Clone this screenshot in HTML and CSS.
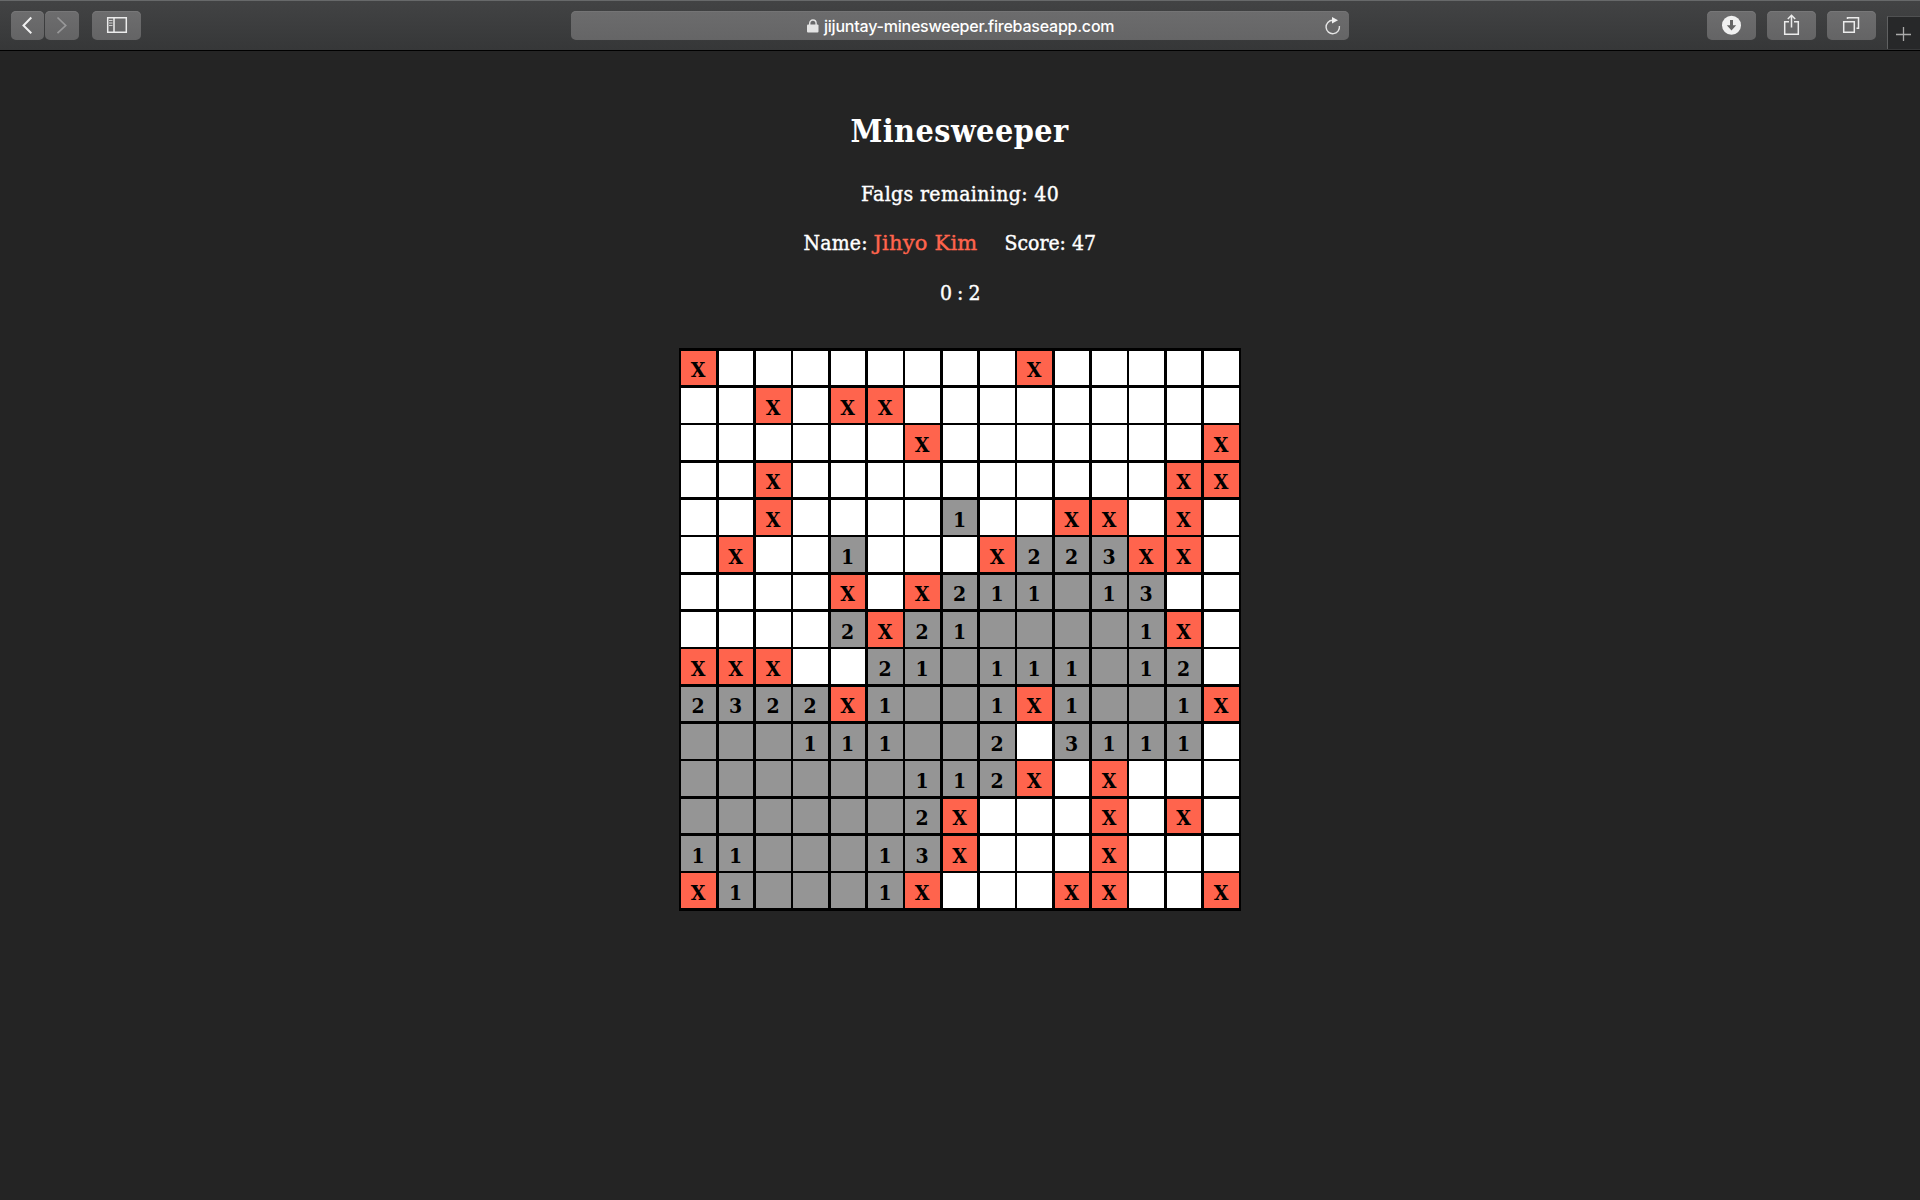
FILE: index.html
```
<!DOCTYPE html>
<html lang="en">
<head>
<meta charset="utf-8">
<title>Minesweeper</title>
<link rel="stylesheet" href="styles.css">
</head>
<body>
<header class="toolbar">
  <div class="group nav">
    <button class="btn arrow" aria-label="Back"><svg width="33" height="29" viewBox="0 0 33 29"><path d="M20.3 6.500 12.500 14.500 20.300 22.200" fill="none" stroke="#f0f0f0" stroke-width="2"/></svg></button>
    <button class="btn arrow" aria-label="Forward"><svg width="34" height="29" viewBox="0 0 34 29"><path d="M12.500 6.500 20.700 14.500 12.500 22.200" fill="none" stroke="#989899" stroke-width="1.700"/></svg></button>
    <button class="btn sidebar" aria-label="Sidebar"><svg width="49" height="29" viewBox="0 0 49 29"><path d="M15.700 6.700h18.600v14.600H15.700zM22 6.500v15" fill="none" stroke="#ececec" stroke-width="1.500"/><path d="M17 9.500h3.500M17 12h3.500M17 14.500h3.500" stroke="#ccc"/></svg></button>
  </div>
  <div class="address">
    <svg class="lock" width="12" height="14" viewBox="0 0 12 14"><path d="M2.700 6V4.200a3.200 3.200 0 0 1 6.400 0V6" fill="none" stroke="#e4e4e4" stroke-width="1.400"/><rect x="0" y="5.500" width="11.500" height="8" rx="1" fill="#e4e4e4"/></svg>
    <span class="url">jijuntay-minesweeper.firebaseapp.com</span>
    <svg class="reload" width="18" height="18" viewBox="0 0 18 18"><path d="M8.700 3.300A6.700 6.700 0 1 0 15.400 9" fill="none" stroke="#e4e4e4" stroke-width="1.400"/><path d="M8 0 14 3.300 8 6.600z" fill="#f0f0f0"/></svg>
  </div>
  <div class="group actions">
    <button class="btn" aria-label="Downloads"><svg width="49" height="29" viewBox="0 0 49 29"><circle cx="24.500" cy="14.300" r="9.500" fill="#f0f0f0"/><path d="M23 9h3v5.300h3.200L24.500 19.500 19.800 14.300H23z" fill="#666"/></svg></button>
    <button class="btn" aria-label="Share"><svg width="49" height="29" viewBox="0 0 49 29"><path d="M22 10.700h-4.300v12.600h13.600V10.700H27M24.500 16.500V4.500M20.800 8l3.700-3.700L28.200 8" fill="none" stroke="#ececec" stroke-width="1.500"/></svg></button>
    <button class="btn" aria-label="Tabs"><svg width="49" height="29" viewBox="0 0 49 29"><path d="M16.700 10.700h10.600v10.600H16.700zM20.500 8V6.700h11v10.600h-2" fill="none" stroke="#ececec" stroke-width="1.500"/></svg></button>
  </div>
  <div class="newtab"><svg width="32" height="33" viewBox="0 0 32 33"><path d="M8 17.500h15M15.500 10v14" stroke="#aaa" stroke-width="1.300"/></svg></div>
</header>
<main class="game">
  <h1 class="title">Minesweeper</h1>
  <p class="line flags">Falgs remaining: 40</p>
  <p class="line player"><span class="label">Name:</span><span class="name">Jihyo Kim</span><span class="score">Score: 47</span></p>
  <p class="line time">0 : 2</p>
  <div class="board" id="board"></div>
</main>
<script src="board.js"></script>
</body>
</html>
```
FILE: board.js
```
// X = mine, digit = neighbour count, _ = opened and empty, . = covered
const rows = [
  "X........X.....",
  "..X.XX.........",
  "......X.......X",
  "..X..........XX",
  "..X....1..XX.X.",
  ".X..1...X223XX.",
  "....X.X211_13..",
  "....2X21____1X.",
  "XXX..21_111_12.",
  "2322X1__1X1__1X",
  "___111__2.3111.",
  "______112X.X...",
  "______2X...X.X.",
  "11___13X...X...",
  "X1___1X...XX..X"
];
const board = document.getElementById("board");
for (const row of rows) {
  const line = document.createElement("div");
  line.className = "row";
  for (const c of row) {
    const cell = document.createElement("div");
    cell.className = "cell" + (c === "X" ? " mine" : c === "." ? "" : " open");
    if (c !== "." && c !== "_") cell.textContent = c;
    line.append(cell);
  }
  board.append(line);
}
```
FILE: styles.css
```
* { box-sizing: border-box; }
body {
  margin: 0;
  min-height: 1200px;
  background: #242424;
  color: #fff;
  font-family: "Roboto Slab", "DejaVu Serif Condensed", "DejaVu Serif", serif;
}
.toolbar {
  display: grid;
  grid-template-columns: 571px 778px 1fr 33px;
  height: 51px;
  padding-top: 10px;
  background: linear-gradient(#424344, #363738);
  border-top: 1px solid #67696a;
  border-bottom: 1px solid #000;
}
.group { display: flex; height: 29px; }
.nav { padding-left: 11px; }
.actions { justify-content: flex-end; gap: 11px; padding-right: 11px; }
.btn {
  width: 49px;
  height: 29px;
  padding: 0;
  border: 0;
  border-radius: 5px;
  background: linear-gradient(#6d6d6e, #646465);
  box-shadow: inset 0 1px #777778;
}
.btn svg { display: block; }
.arrow { width: 33px; margin-right: 1px; }
.arrow + .arrow { width: 34px; margin-right: 13px; }
.address {
  display: flex;
  align-items: center;
  height: 29px;
  padding: 0 7px 0 236px;
  border-radius: 5px;
  background: linear-gradient(#6c6c6d, #656566);
  box-shadow: inset 0 1px #747475;
}
.lock { margin-right: 5px; }
.url { padding-top: 2px; font: 500 16px/29px Inter, sans-serif; letter-spacing: -0.22px; white-space: nowrap; }
.reload { margin-left: auto; }
.newtab {
  height: 33px;
  margin-top: 5px;
  background: #272829;
  border-left: 1px solid #606162;
  border-top: 1px solid #505152;
}
.game { display: flex; flex-direction: column; align-items: center; }
.title { margin: 54px 0 0; padding-right: 1px; font-size: 32px; line-height: 52px; height: 64px; letter-spacing: 0.450px; }
.line { margin: 0; height: 49.300px; font-size: 21px; line-height: 50px; white-space: nowrap; -webkit-text-stroke: 0.400px; }
.flags { letter-spacing: 0.370px; }
.time { letter-spacing: -0.450px; }
.player { display: flex; width: 313px; }
.label { width: 70px; letter-spacing: 0.200px; }
.name { width: 131px; font-family: "Roboto Slab", "DejaVu Serif", serif; letter-spacing: 0.200px; color: #ff644d; }
.board { margin-top: 31px; padding: 3px 0 0 2px; width: 562px; height: 563px; background: #000; }
.row { display: grid; grid-template-columns: repeat(5, 38px 37px 37px); grid-template-rows: 100%; height: 37px; line-height: 39px; border-bottom: 3px solid #000; }
.row:nth-child(3n+1) { line-height: 37px; }
.row:nth-child(3n+2) { border-bottom-width: 2px; }
.row:nth-child(3n) { height: 38px; }
.cell {
  padding-right: 1px;
  background: #fff;
  border-right: 3px solid #000;
  color: #000;
  font-size: 21px;
  font-weight: bold;
  text-align: center;
}
.cell:nth-child(3n) { border-right-width: 2px; }
.mine { background: #ff644d; }
.open { background: #959595; }
```
